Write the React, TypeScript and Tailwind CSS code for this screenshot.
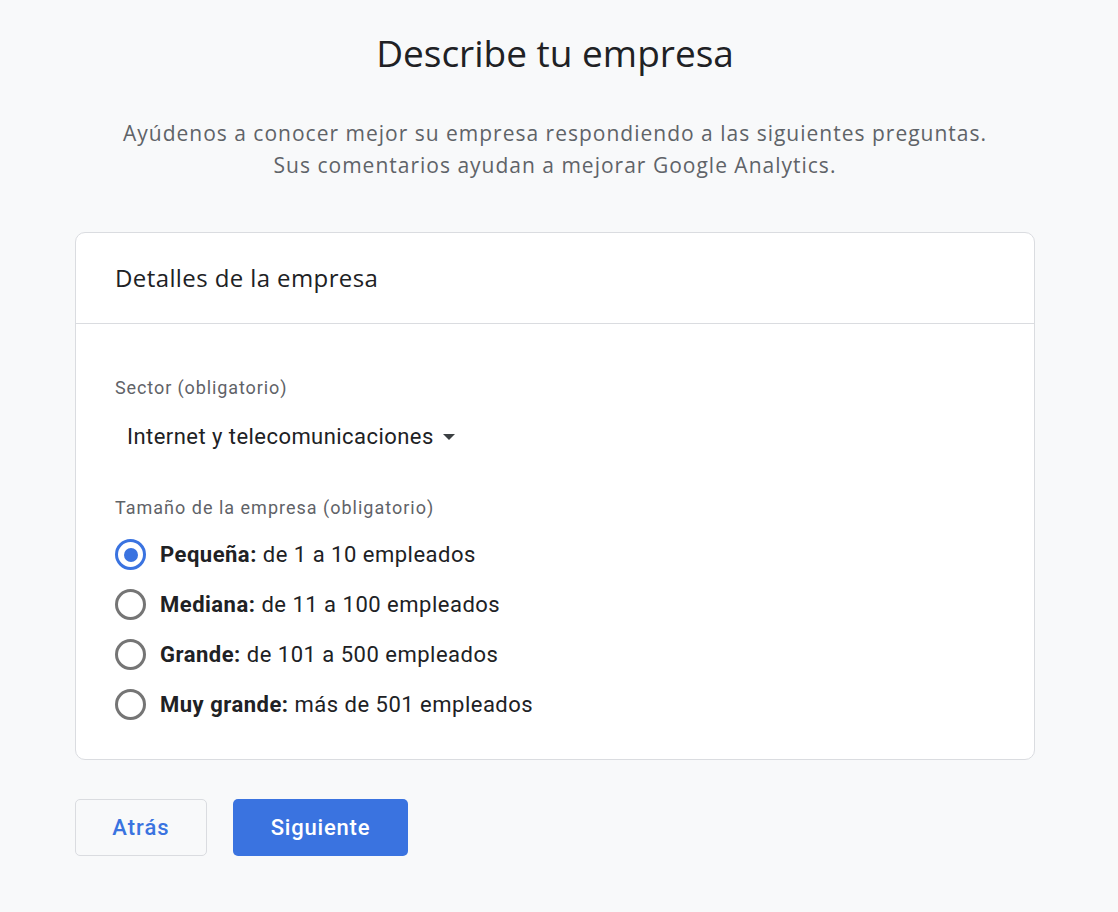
import React, { useState } from "react";

const sizes = [
  { label: "Pequeña:", text: " de 1 a 10 empleados" },
  { label: "Mediana:", text: " de 11 a 100 empleados" },
  { label: "Grande:", text: " de 101 a 500 empleados" },
  { label: "Muy grande:", text: " más de 501 empleados" },
];

function Radio({ checked }: { checked: boolean }) {
  return (
    <span
      className={`flex h-[31px] w-[31px] shrink-0 items-center justify-center rounded-full border-[3px] ${
        checked ? "border-[#3a73e0]" : "border-[#757575]"
      }`}
    >
      {checked && <span className="h-[14px] w-[14px] rounded-full bg-[#3a73e0]" />}
    </span>
  );
}

export default function App() {
  const [selected, setSelected] = useState(0);

  return (
    <div className="min-h-[912px] bg-[#f8f9fa] font-['Roboto','Liberation_Sans',sans-serif] text-[#202124]">
      <div className="ml-[75px] w-[960px] pt-[28px]">
        <h1 className="text-center font-['Open_Sans','Roboto',sans-serif] text-[37px] leading-[50px] text-[#202124]">
          Describe tu empresa
        </h1>
        <p className="mt-[39px] text-center font-['Open_Sans','Roboto',sans-serif] text-[21px] leading-[32px] tracking-[1px] text-[#5f6368]">
          Ayúdenos a conocer mejor su empresa respondiendo a las siguientes preguntas.
          <br />
          Sus comentarios ayudan a mejorar Google Analytics.
        </p>

        {/* card */}
        <div className="mt-[51px] rounded-[10px] border border-[#dadce0] bg-white">
          <div className="flex h-[91px] items-center border-b border-[#dadce0] px-[39px]">
            <h2 className="font-['Open_Sans','Roboto',sans-serif] text-[24px] tracking-[0.4px] text-[#202124]">
              Detalles de la empresa
            </h2>
          </div>
          <div className="px-[39px] pt-[52px] pb-[39px]">
            <div className="text-[18px] leading-[24px] tracking-[0.9px] text-[#5f6368]">
              Sector (obligatorio)
            </div>
            <button className="mt-[16px] flex items-center gap-[9px] px-[12px] py-[6px] text-[22px] leading-[30px] tracking-[0.45px] text-[#202124]">
              Internet y telecomunicaciones
              <svg width="12" height="6" viewBox="0 0 12 6">
                <path d="M0 0h12L6 6z" fill="#3c4043" />
              </svg>
            </button>

            <div className="mt-[38px] text-[18px] leading-[24px] tracking-[1px] text-[#5f6368]">
              Tamaño de la empresa (obligatorio)
            </div>
            <div className="mt-[19px] flex flex-col gap-[19px]">
              {sizes.map((s, i) => (
                <label
                  key={s.label}
                  onClick={() => setSelected(i)}
                  className="flex cursor-pointer items-center gap-[14px] text-[22px] leading-[31px] tracking-[0.5px]"
                >
                  <Radio checked={selected === i} />
                  <span>
                    <b className="font-bold">{s.label}</b>
                    {s.text}
                  </span>
                </label>
              ))}
            </div>
          </div>
        </div>

        {/* actions */}
        <div className="mt-[39px] flex gap-[26px]">
          <button className="h-[57px] w-[132px] rounded-[5px] border border-[#dadce0] bg-[#f8f9fa] text-[22px] font-medium tracking-[1px] text-[#3a73e0]">
            Atrás
          </button>
          <button className="h-[57px] w-[175px] rounded-[5px] bg-[#3a73e0] text-[22px] font-medium tracking-[0.8px] text-white">
            Siguiente
          </button>
        </div>
      </div>
    </div>
  );
}
